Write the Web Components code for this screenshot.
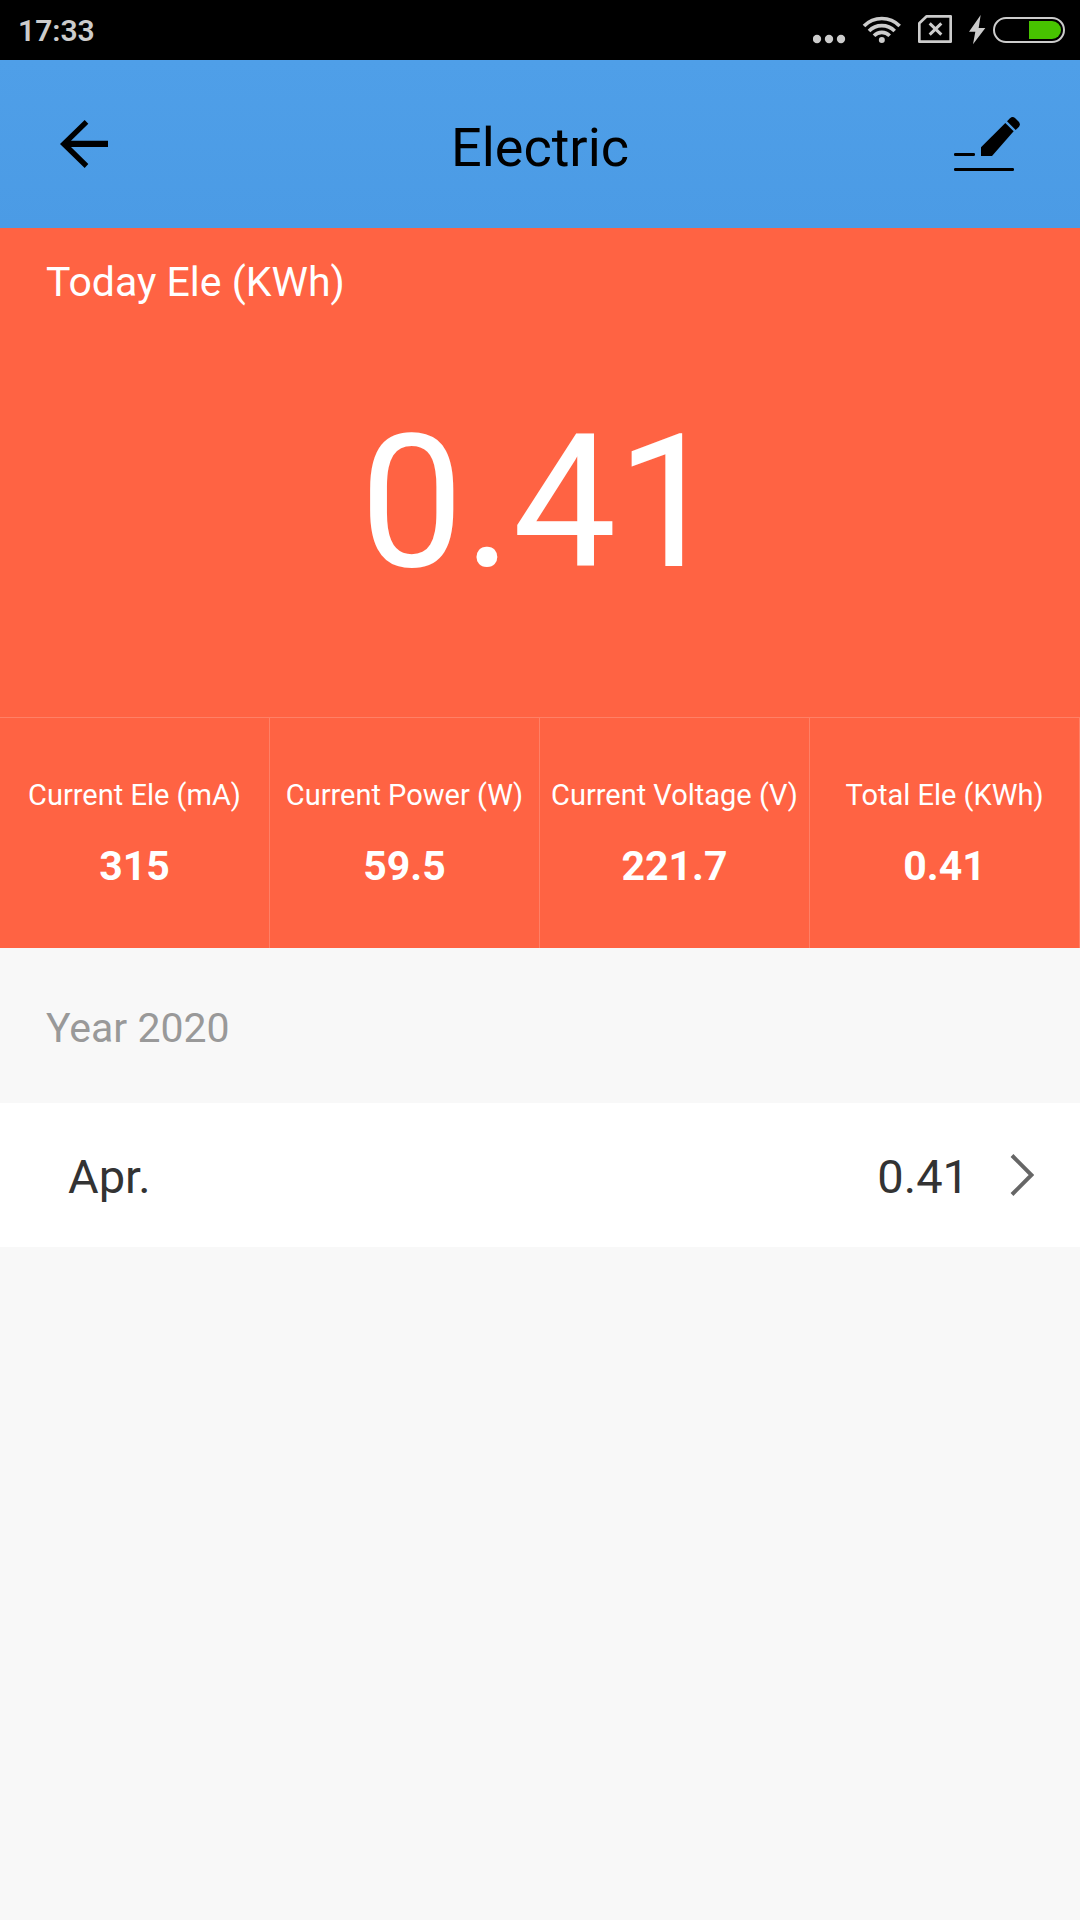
<!DOCTYPE html>
<html lang="en">
<head>
<meta charset="utf-8">
<meta name="viewport" content="width=device-width, initial-scale=1">
<title>Electric</title>
<style>
  body { margin: 0; min-height: 100vh; background: #f8f8f8; font-family: Roboto, "Noto Sans", sans-serif; color: #333; }
</style>
</head>
<body>
<electric-app></electric-app>

<script>
const define = (name, html) => {
  const template = document.createElement('template');
  template.innerHTML = html;
  customElements.define(name, class extends HTMLElement {
    constructor() {
      super();
      this.attachShadow({ mode: 'open' }).append(template.content.cloneNode(true));
    }
  });
};

define('status-bar', `
  <style>
    :host { display: flex; align-items: center; justify-content: space-between; height: 60px; padding: 0 15px 0 18px; background: #000; color: #ccc; }
    time { padding-top: 2px; font-size: 30px; line-height: 36px; font-weight: 600; }
    .icons, .power { display: flex; align-items: center; }
    .icons { gap: 16px; }
    .power { gap: 7px; }
    svg { display: block; height: 32px; }
  </style>
  <time><slot></slot></time>
  <div class="icons">
    <svg width="33" viewBox="39 42 99 96" fill="#ccc"><circle cx="51" cy="117" r="12.5"/><circle cx="87" cy="117" r="12.5"/><circle cx="123" cy="117" r="12.5"/></svg>
    <svg width="40" viewBox="186 42 120 96" fill="none" stroke="#ccc" stroke-width="11">
      <path d="M192 78 A75 75 0 0 1 299 78"/><path d="M207 93 A54 54 0 0 1 284 93"/><path d="M222 107 A33 33 0 0 1 269 107"/>
      <circle cx="245.500" cy="120" r="9" fill="#ccc" stroke="none"/>
    </svg>
    <svg width="34" viewBox="354 42 102 96" fill="none" stroke="#ccc">
      <path stroke-width="8" stroke-linejoin="round" d="M380 49 H452 V125 H358 V70 Z"/>
      <path stroke-width="9" d="M389 70 L424 104 M424 70 L389 104"/>
    </svg>
    <div class="power">
      <svg width="18" viewBox="504 42 54 96" fill="#ccc"><path d="M542 45 L507 95 H526 L519 133 L556 84 H536 Z"/></svg>
      <svg width="72" viewBox="579 42 216 96">
        <rect x="582" y="54" width="210" height="72" rx="36" fill="none" stroke="#ccc" stroke-width="6"/>
        <path d="M687 63 H756 A27 27 0 0 1 756 117 H687 Z" fill="#47c400"/>
      </svg>
    </div>
  </div>`);

define('app-header', `
  <style>
    :host { display: grid; grid-template-columns: 1fr auto 1fr; align-items: center; height: 168px; padding: 0 60px; background: linear-gradient(#4f9fe8, #4b9be5); color: #000; }
    h1 { margin: 0; padding-top: 8px; font-size: 54px; line-height: 64px; font-weight: 400; }
    button { display: block; padding: 0; border: 0; background: none; color: inherit; cursor: pointer; }
    .edit { justify-self: end; }
    .back { justify-self: start; }
    svg { display: block; }
  </style>
  <button class="back" aria-label="Back">
    <svg width="48" height="48" viewBox="180 360 144 144"><path d="M180 432 L254 360 L265 371 L213 422 H324 V441 H213 L265 492 L254 504 Z"/></svg>
  </button>
  <h1><slot></slot></h1>
  <button class="edit" aria-label="Edit">
    <svg width="66" height="54" viewBox="162 111 198 162">
      <rect x="162" y="219" width="63" height="9" rx="4"/><rect x="162" y="264" width="180" height="9" rx="4"/>
      <path d="M243 202 L316 129 L341 154 L276 228 H243 Z"/>
      <path d="M321 124 L330 115 Q337 108 345 114 L357 126 Q362 133 357 140 L347 150 Z"/>
    </svg>
  </button>`);

define('today-panel', `
  <style>
    :host { display: block; padding: 29px 46px 104px; background: #ff6343; color: #fff; }
    h2 { margin: 0; font-size: 41px; line-height: 50px; font-weight: 400; }
    output { display: block; padding-top: 86px; font-size: 185px; line-height: 220px; text-align: center; }
  </style>
  <h2><slot name="label"></slot></h2>
  <output><slot></slot></output>`);

define('stat-grid', `
  <style>
    :host { display: grid; grid-template-columns: repeat(4, 1fr); border-top: 1px solid #ff8066; background: #ff6343; color: #fff; }
  </style>
  <slot></slot>`);

define('stat-cell', `
  <style>
    :host { display: flex; flex-direction: column; align-items: center; gap: 28px; padding: 59px 0 57px; border-right: 1px solid #ff8066; text-align: center; white-space: nowrap; }
    .label { font-size: 29px; line-height: 36px; }
    .value { font-size: 41px; line-height: 50px; font-weight: 700; }
  </style>
  <span class="label"><slot name="label"></slot></span>
  <span class="value"><slot></slot></span>`);

define('year-section', `
  <style>
    :host { display: block; }
    h2 { margin: 0; padding: 55px 46px 50px; font-size: 41px; line-height: 50px; font-weight: 400; color: #999; }
  </style>
  <h2><slot name="title"></slot></h2>
  <slot></slot>`);

define('month-row', `
  <style>
    :host { display: block; background: #fff; }
    a { display: flex; align-items: center; height: 144px; padding: 0 46px 0 68px; color: #333; text-decoration: none; font-size: 47px; line-height: 56px; }
    .text { padding-top: 4px; }
    .month { flex: 1; }
    svg { display: block; margin-left: 41px; }
  </style>
  <a href="#month">
    <span class="text month"><slot name="month"></slot></span>
    <span class="text"><slot></slot></span>
    <svg width="24" height="42" viewBox="0 0 24 42" fill="none" stroke="#666" stroke-width="4"><path d="M2 1.500 L21.500 21 L2 40.500"/></svg>
  </a>`);

define('electric-app', `
  <style>:host { display: block; }</style>
  <status-bar>17:33</status-bar>
  <app-header>Electric</app-header>
  <main>
    <today-panel><span slot="label">Today Ele (KWh)</span>0.41</today-panel>
    <stat-grid>
      <stat-cell><span slot="label">Current Ele (mA)</span>315</stat-cell>
      <stat-cell><span slot="label">Current Power (W)</span>59.5</stat-cell>
      <stat-cell><span slot="label">Current Voltage (V)</span>221.7</stat-cell>
      <stat-cell><span slot="label">Total Ele (KWh)</span>0.41</stat-cell>
    </stat-grid>
    <year-section>
      <span slot="title">Year 2020</span>
      <month-row><span slot="month">Apr.</span>0.41</month-row>
    </year-section>
  </main>`);
</script>
</body>
</html>
